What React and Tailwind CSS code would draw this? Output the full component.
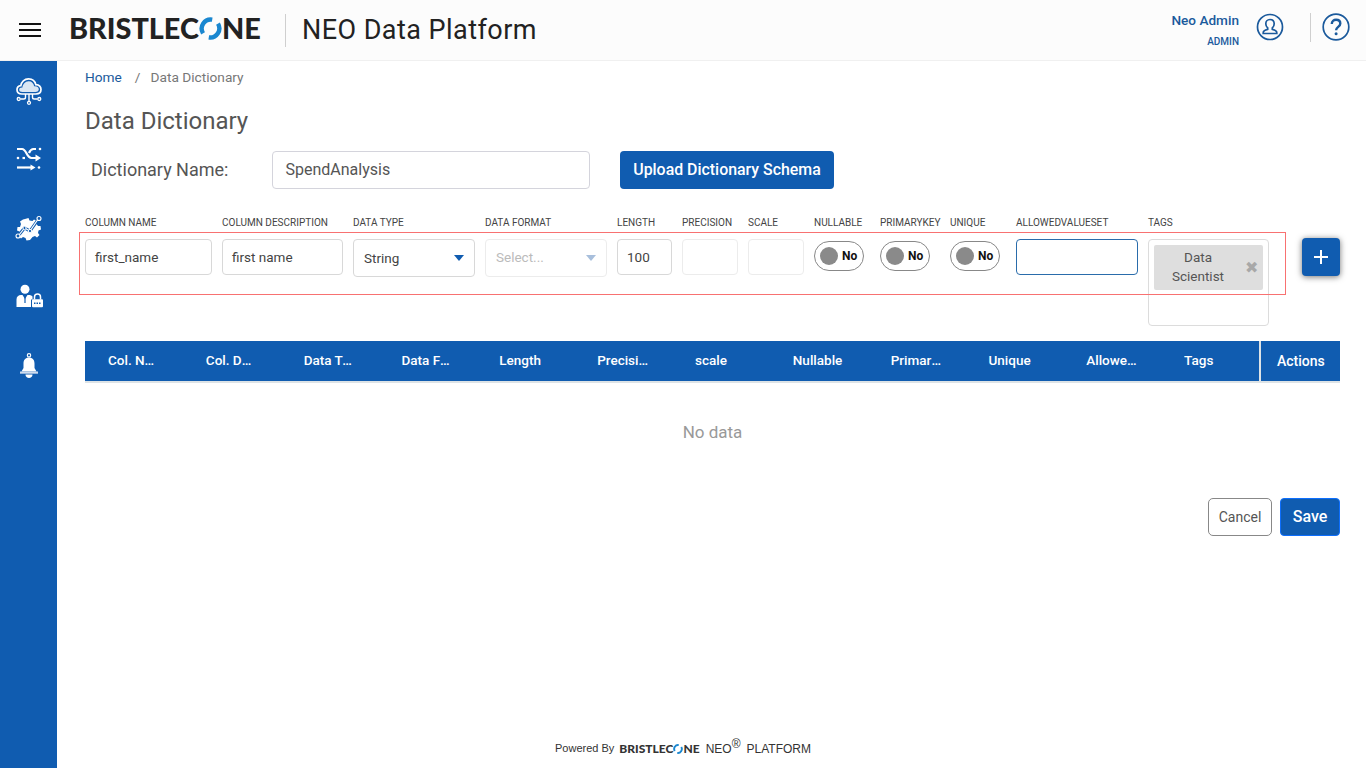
import React from "react";

const BLUE = "#105cb0";

function LogoO({ size }) {
  return (
    <svg width={size} height={size} viewBox="0 0 24 24" fill="none" className="inline-block shrink-0">
      <path d="M4.200 17A9.500 9.500 0 0 1 13.800 2.700" stroke="#1a87d0" strokeWidth="4.600" />
      <path d="M19.800 7A9.500 9.500 0 0 1 10.200 21.300" stroke="#1a87d0" strokeWidth="4.600" />
    </svg>
  );
}

function CloudIcon() {
  return (
    <svg width="28" height="28" viewBox="0 0 28 28" fill="none" stroke="#fff" strokeWidth="1.300" className="block">
      <path d="M7 17c-3 0-5-1.800-5-4.200 0-2.300 1.700-3.900 3.800-4.100C6.300 4.800 9.500 1.800 13.500 1.800c3.700 0 6.600 2.400 7.300 5.900 3 .2 5.200 2.200 5.200 4.900 0 2.600-2 4.400-5 4.400z" strokeWidth="1.700" />
      <path d="M7.500 15c-2.200 0-3.300-1-3.300-2.300 0-1.400 1.200-2.300 3.200-2.200.2-3.200 2.800-6.300 6.200-6.300 3 0 5.200 2 5.500 5.100 2.600-.3 4.700.8 4.700 3 0 1.600-1.300 2.700-3.500 2.700z" fill="#fff" fillOpacity="0.85" stroke="none" />
      <path d="M14 17v7M10.500 17v3.200q0 1.800-1.800 1.800H5.500M17.500 17v3.200q0 1.800 1.800 1.800h3.200" strokeWidth="1.400" />
      <circle cx="3.700" cy="22" r="1.500" />
      <circle cx="24.300" cy="22" r="1.500" />
      <circle cx="14" cy="25.800" r="1.500" />
    </svg>
  );
}

function ShuffleIcon() {
  return (
    <svg width="26" height="24" viewBox="0 0 26 24" fill="none" stroke="#fff" strokeWidth="2.200" className="block">
      <path d="M1 2h5c4.500 0 4.500 9 9.500 9H20" />
      <path d="M19.500 7.500l5.500 3.500-5.500 3.500z" fill="#fff" stroke="none" />
      <path d="M1 20.500h14" />
      <path d="M14.500 17.500l5 3-5 3z" fill="#fff" stroke="none" />
      <path d="M13 6c1-2.300 2.300-4 4.500-4H20" />
      <path d="M6.500 11H9" />
      <circle cx="2" cy="11" r="1.300" fill="#fff" stroke="none" />
      <circle cx="24" cy="2" r="1.300" fill="#fff" stroke="none" />
      <circle cx="23" cy="20.500" r="1.300" fill="#fff" stroke="none" />
    </svg>
  );
}

function GearIcon() {
  return (
    <svg width="28" height="26" viewBox="0 0 28 26" fill="none" className="block">
      <path d="M10 4l3.500-1 1 2.500 3 .5 1.500-1.500 3.500 2-1 2.500 1.500 2 2.500 0 .5 3.500-2.500 1-.5 2.500 1.500 2-2.500 2.500-2-1.500-2.500 1L15 25l-3.500.5-1-2.500-2.500-1-2 1.500L3.500 21 5 19l-.5-2.500-2.500-1L2.500 12 5 12l1-3L5 6.500l3-2z" fill="#fff" />
      <path d="M3 21l6.500-8 5.500 3 8.500-12" stroke={BLUE} strokeWidth="3" />
      <path d="M4 20l5.500-7 5.500 3 7.500-11" stroke="#fff" strokeWidth="1.200" />
      <circle cx="24" cy="3.500" r="2" fill={BLUE} stroke="#fff" strokeWidth="1.100" />
      <circle cx="3" cy="21" r="2" fill={BLUE} stroke="#fff" strokeWidth="1.100" />
      <circle cx="9.500" cy="13" r="1.600" fill={BLUE} stroke="#fff" strokeWidth="1" />
      <circle cx="15" cy="16" r="1.600" fill={BLUE} stroke="#fff" strokeWidth="1" />
    </svg>
  );
}

function AdminLockIcon() {
  return (
    <svg width="28" height="24" viewBox="0 0 28 24" fill="none" className="block">
      <circle cx="10" cy="5.200" r="4.500" fill="#fff" />
      <path d="M1.500 23v-7.500c0-3 2-4.500 4.500-4.500h1.500L10 15l2.500-4h1.500c1.500 0 2.500.5 3.500 1.500V15.500H16V23z" fill="#fff" />
      <path d="M10 12.500V19" stroke={BLUE} strokeWidth="1.200" />
      <path d="M19.500 15.500V13a3 3 0 0 1 6 0v2.500" stroke="#fff" strokeWidth="1.500" />
      <rect x="17" y="15.200" width="11" height="8" rx="1" fill="#fff" />
      <path d="M19 19.300h7" stroke={BLUE} strokeWidth="1.600" strokeDasharray="1.500 1" />
    </svg>
  );
}

function BellIcon() {
  return (
    <svg width="22" height="26" viewBox="0 0 22 26" fill="none" className="block">
      <circle cx="11" cy="2.300" r="1.700" stroke="#fff" strokeWidth="1.100" />
      <path d="M11 4.500c-3.500 0-5.500 2.500-5.500 6v4.500L3.500 18.500h15L16.500 15v-4.500c0-3.500-2-6-5.500-6z" fill="#fff" />
      <rect x="2" y="18.500" width="18" height="2.200" fill="#cfdcee" />
      <path d="M7.500 21.500h7c0 2-1.500 3.500-3.500 3.500s-3.500-1.500-3.500-3.500z" fill="#fff" />
    </svg>
  );
}

function UserCircle() {
  return (
    <svg width="28" height="28" viewBox="0 0 28 28" fill="none" stroke="#1b5a9c" strokeWidth="1.700" className="block">
      <circle cx="14" cy="14" r="12.500" />
      <path d="M14 6.500c-2.700 0-4.200 2-4.200 4.300 0 1.700.8 3.300 1.900 4.200v1.300c-2.500.6-4.500 1.400-4.500 3.400v.8h13.600v-.8c0-2-2-2.800-4.500-3.400V15c1.100-.9 1.900-2.500 1.900-4.200 0-2.300-1.500-4.300-4.200-4.300z" />
    </svg>
  );
}

function HelpCircle() {
  return (
    <svg width="28" height="28" viewBox="0 0 28 28" fill="none" stroke="#1b5a9c" strokeWidth="1.700" className="block">
      <circle cx="14" cy="14" r="12.800" />
      <path d="M9.800 11c0-2.800 1.900-4.200 4.300-4.200s4.200 1.400 4.200 3.700c0 3.400-4.200 3.400-4.200 6.800" strokeWidth="2.400" />
      <circle cx="14.100" cy="20.800" r="1.500" fill="#1b5a9c" stroke="none" />
    </svg>
  );
}

function Field({ label, w, children }) {
  return (
    <div className="shrink-0" style={{ width: w }}>
      <div className="h-[24px] pt-[1px] text-[10px] leading-[14px] uppercase whitespace-nowrap text-[#444]">{label}</div>
      {children}
    </div>
  );
}

function TextBox({ value, disabled }) {
  return (
    <div className={`h-[36px] rounded-[4px] border px-[9px] text-[13.500px] leading-[34px] text-[#444] ${disabled ? "border-[#ececec]" : "border-[#d8d8d8]"}`}>
      {value}
    </div>
  );
}

function SelectBox({ value, disabled }) {
  return (
    <div className={`h-[38px] rounded-[4px] border pl-[10px] pr-[10px] flex items-center justify-between text-[13.500px] ${disabled ? "border-[#ececec] text-[#bbb]" : "border-[#d8d8d8] text-[#444]"}`}>
      <span className={disabled ? "-mt-[1px]" : ""}>{value}</span>
      <span className={`w-0 h-0 border-l-[5.500px] border-r-[5.500px] border-t-[6px] border-l-transparent border-r-transparent -mt-[1px] ${disabled ? "border-t-[#a8bfdc]" : "border-t-[#105cb0]"}`} />
    </div>
  );
}

function Toggle() {
  return (
    <div className="mt-[2px] w-[50px] h-[30px] rounded-full border border-[#888] flex items-center pl-[5px] gap-[4px]">
      <span className="w-[18px] h-[18px] rounded-full bg-[#8a8a8a]" />
      <span className="text-[12px] font-bold text-[#111]">No</span>
    </div>
  );
}

const headers = ["Col. Name", "Col. Description", "Data Type", "Data Format", "Length", "Precision", "scale", "Nullable", "PrimaryKey", "Unique", "AllowedValueSet", "Tags"];

export default function App() {
  return (
    <div className="h-screen flex flex-col bg-white overflow-hidden font-['Roboto',sans-serif]">
      <header className="h-[61px] shrink-0 bg-[#fcfcfc] border-b border-[#f0f0f0] flex items-center">
        <div className="w-[70px] pl-[19px] flex flex-col gap-[4px] shrink-0">
          <span className="w-[22px] h-[2px] bg-[#111]" />
          <span className="w-[22px] h-[2px] bg-[#111]" />
          <span className="w-[22px] h-[2px] bg-[#111]" />
        </div>
        <div className="w-[192px] -mt-[3px] -ml-[1px] mr-[1px] flex items-center font-['Lato',sans-serif] font-black text-[28.800px] leading-none text-[#222] shrink-0">
          <span>BRISTLEC</span>
          <LogoO size={23} />
          <span>NE</span>
        </div>
        <div className="ml-[23px] w-px h-[33px] bg-[#cfcfcf]" />
        <div className="ml-[16px] text-[27px] text-[#222] tracking-[0.45px] leading-none">NEO Data Platform</div>
        <div className="ml-auto flex items-center -mt-[6px]">
          <div className="text-right text-[#1b5a9c]">
            <div className="text-[13.600px] font-medium leading-[16px] mt-[5px]">Neo Admin</div>
            <div className="text-[10px] font-medium leading-[12px] mt-[8px]">ADMIN</div>
          </div>
          <div className="ml-[17px]"><UserCircle /></div>
          <div className="ml-[26px] w-px h-[29px] bg-[#cfcfcf]" />
          <div className="ml-[11px] mr-[16px]"><HelpCircle /></div>
        </div>
      </header>

      <div className="flex-1 flex min-h-0">
        <aside className="w-[57px] shrink-0 bg-[#105cb0] flex flex-col items-center pt-[16px]">
          <div className="h-[28px]"><CloudIcon /></div>
          <div className="mt-[42px] h-[24px]"><ShuffleIcon /></div>
          <div className="mt-[44px] h-[26px]"><GearIcon /></div>
          <div className="mt-[43px] h-[24px]"><AdminLockIcon /></div>
          <div className="mt-[45px] h-[26px]"><BellIcon /></div>
        </aside>

        <main className="flex-1 min-w-0 flex flex-col pl-[28px] pr-[26px]">
          <nav className="pt-[7px] text-[13.700px] leading-[18px] text-[#777] flex">
            <span className="text-[#1b5a9c]">Home</span>
            <span className="ml-[13px]">/</span>
            <span className="ml-[10px]">Data Dictionary</span>
          </nav>
          <h1 className="mt-[19px] text-[24px] leading-[32px] text-[#555]">Data Dictionary</h1>

          <div className="mt-[14px] flex items-center h-[38px]">
            <label className="ml-[6px] mb-[1px] w-[181px] text-[18px] text-[#555]">Dictionary Name:</label>
            <div className="w-[318px] h-[38px] rounded-[4px] border border-[#d4d4dc] px-[12.500px] text-[16px] leading-[36px] text-[#555]">SpendAnalysis</div>
            <button className="ml-[30px] w-[214px] h-[38px] rounded-[4px] bg-[#105cb0] text-white text-[15.900px] font-medium">Upload Dictionary Schema</button>
          </div>

          <div className="relative mt-[26px] flex gap-[10px] items-start h-[126px]">
            <div className="absolute left-[-6px] top-[17px] w-[1207px] h-[63px] border border-[#f87171] pointer-events-none" />
            <Field label="Column Name" w={127}><TextBox value="first_name" /></Field>
            <Field label="Column Description" w={121}><TextBox value="first name" /></Field>
            <Field label="Data Type" w={122}><SelectBox value="String" /></Field>
            <Field label="Data Format" w={122}><SelectBox value="Select..." disabled /></Field>
            <Field label="Length" w={55}><TextBox value="100" /></Field>
            <Field label="Precision" w={56}><TextBox value="" disabled /></Field>
            <Field label="Scale" w={56}><TextBox value="" disabled /></Field>
            <Field label="Nullable" w={56}><Toggle /></Field>
            <Field label="PrimaryKey" w={60}><Toggle /></Field>
            <Field label="Unique" w={56}><Toggle /></Field>
            <Field label="AllowedValueSet" w={122}>
              <div className="h-[36px] rounded-[4px] border border-[#2a6cab]" />
            </Field>
            <Field label="Tags" w={121}>
              <div className="h-[87px] rounded-[4px] border border-[#dcdcdc] p-[5px]">
                <div className="h-[45px] rounded-[2px] bg-[#dedede] flex items-center text-[13.500px] leading-[19px] text-[#555]">
                  <span className="w-[88px] px-[12px] text-center -mt-[2px]">Data Scientist</span>
                  <span className="ml-[3px] text-[16px] leading-none text-[#a8a8a8] font-['DejaVu_Sans',sans-serif]">✖</span>
                </div>
              </div>
            </Field>
            <button className="ml-[23px] mt-[23px] w-[38px] h-[38px] shrink-0 rounded-[4px] bg-[#105cb0] flex items-center justify-center shadow-[0_1px_6px_rgba(0,0,0,0.55)]">
              <svg width="14" height="14" viewBox="0 0 14 14" stroke="#fff" strokeWidth="2"><path d="M7 0v14M0 7h14" /></svg>
            </button>
          </div>

          <div className="flex h-[42px] border-b-2 border-[#dde3e6]">
            <div className="w-[1174px] shrink-0 flex bg-[#105cb0] text-white text-[13.500px] font-medium">
              {headers.map((h) => (
                <div key={h} className="w-[97.830px] pl-[23px] h-[40px] leading-[39px] shrink-0">
                  <div className="w-[51px] truncate">{h}</div>
                </div>
              ))}
            </div>
            <div className="w-[81px] shrink-0 h-[40px] border-l-2 border-[#dde3e6] bg-[#105cb0] text-white text-[14px] font-medium pl-[16px] leading-[40px]">Actions</div>
          </div>

          <div className="mt-[39px] text-center text-[17px] leading-[20px] text-[#999]">No data</div>

          <div className="mt-[56px] flex justify-end gap-[8px]">
            <button className="w-[64px] h-[38px] rounded-[5px] border border-[#888] text-[14px] text-[#555]">Cancel</button>
            <button className="w-[60px] h-[38px] rounded-[4px] bg-[#105cb0] border border-[#0d6efd] text-white text-[16px] font-medium">Save</button>
          </div>

          <footer className="mt-auto mr-[59px] h-[38px] flex items-center justify-center pb-[1px] text-[#333] font-['Liberation_Sans',sans-serif]">
            <span className="text-[11px]">Powered By</span>
            <span className="ml-[5px] flex items-center font-['Lato',sans-serif] font-black text-[12px] leading-none text-[#333]">
              BRISTLEC<LogoO size={10} />NE
            </span>
            <span className="ml-[6px] text-[12px]">NEO<sup className="text-[12px] -top-[5px]">®</sup></span>
            <span className="ml-[6px] text-[12px]">PLATFORM</span>
          </footer>
        </main>
      </div>
    </div>
  );
}
